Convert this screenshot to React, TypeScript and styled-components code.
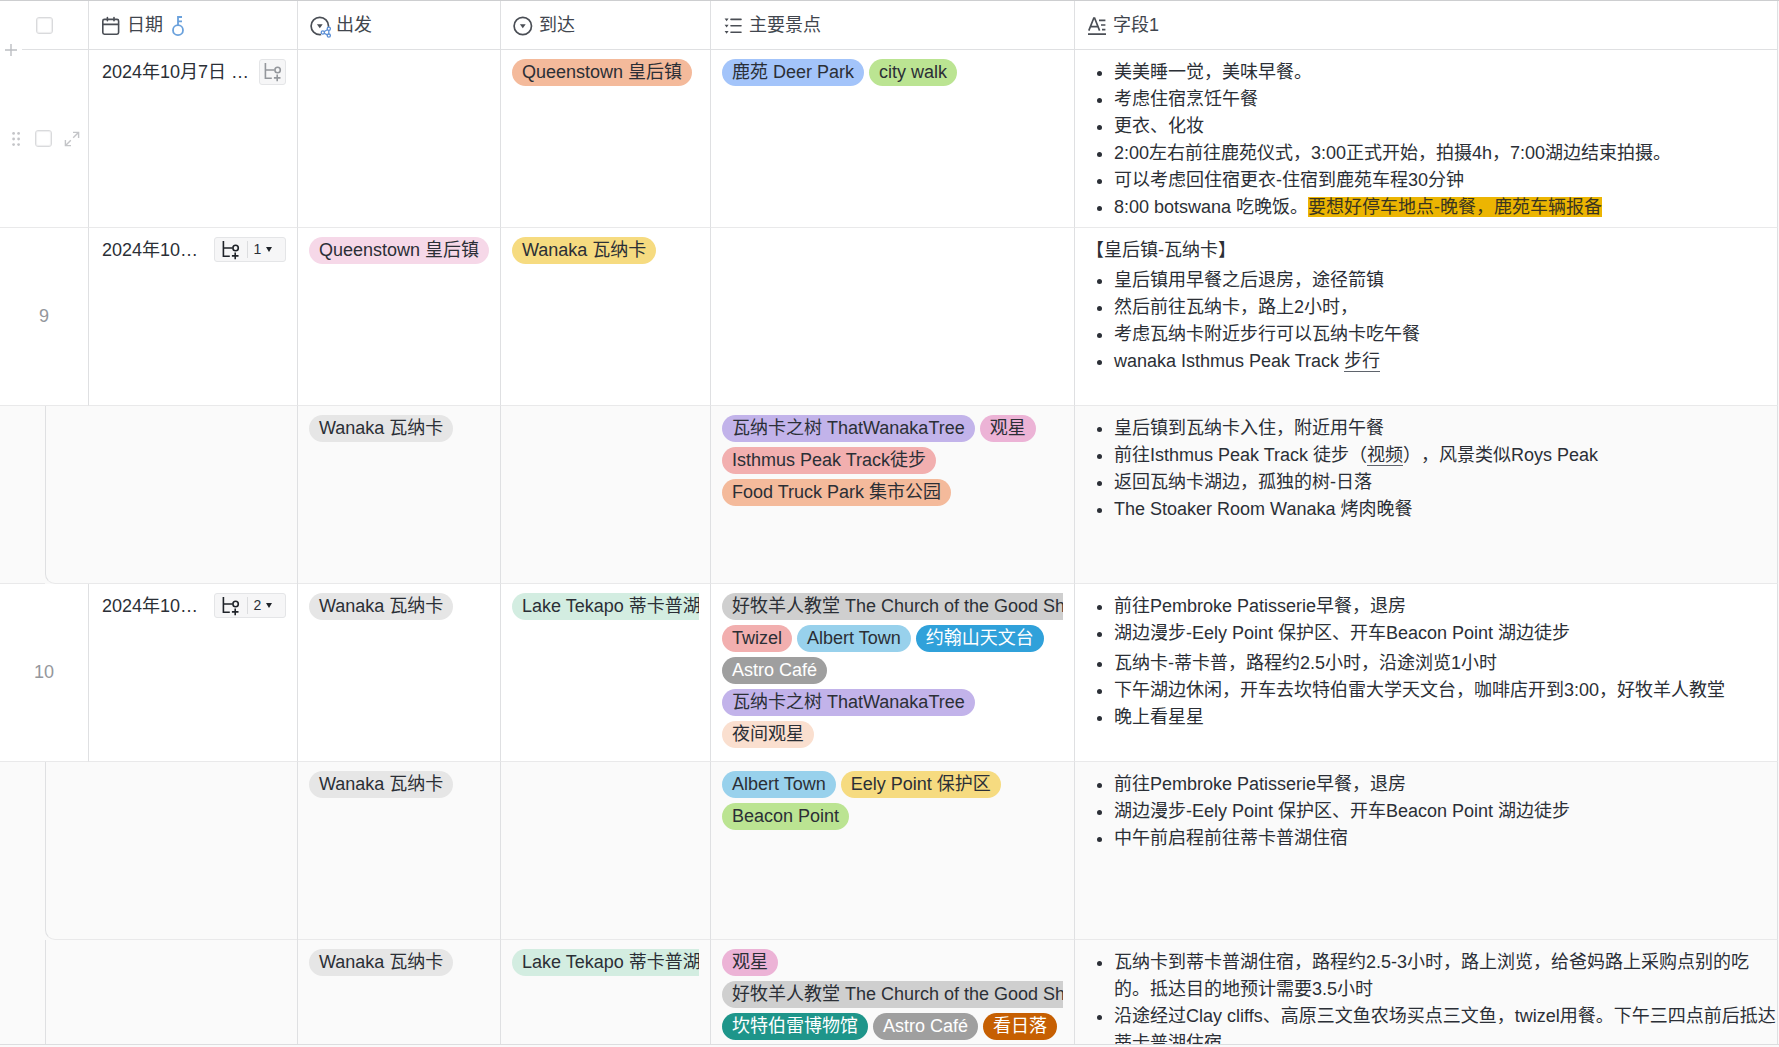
import React from "react";
import styled, { createGlobalStyle, css } from "styled-components";

const LINE = "#dfe0e2";
const ROW_LINE = "#e9e9ea";

const GlobalStyle = createGlobalStyle`
  *, *::before, *::after { box-sizing: border-box; }
  body {
    margin: 0;
    background: #fff;
    color: #2b2f36;
    font-family: "Liberation Sans", "Noto Sans CJK SC", sans-serif;
    font-size: 18px;
    line-height: 27px;
    text-spacing-trim: space-all;
  }
  button { font: inherit; color: inherit; cursor: pointer; }
`;

const Page = styled.div`
  display: flex;
  flex-direction: column;
  height: 100vh;
  padding-bottom: 2px;
  background: #fafafa;
`;

const GridView = styled.main`
  flex: 1;
  min-height: 0;
  overflow: hidden;
  border-top: 1px solid #cdced0;
  border-bottom: 1px solid #dcdddf;
  padding-right: 1px;
`;

const Table = styled.table`
  width: 100%;
  table-layout: fixed;
  border-collapse: separate;
  border-spacing: 0;
  background: #fff;
`;

const Col = styled.col<{ $w?: number }>`
  ${(p) => p.$w && css`width: ${p.$w}px;`}
`;

const HeadCell = styled.th`
  position: relative;
  height: 49px;
  padding: 0 12px;
  border-right: 1px solid ${LINE};
  border-bottom: 1px solid ${LINE};
  font-weight: 400;
  text-align: left;
  color: #41464e;
`;

const HeadLabel = styled.div`
  display: flex;
  align-items: center;
  gap: 6px;
  padding-top: 1px;
  svg { flex: none; }
`;

const KeyMark = styled.span`
  display: flex;
  padding-left: 2px;
`;

const AddButton = styled.button`
  position: absolute;
  left: 0;
  bottom: -9px;
  width: 22px;
  height: 16px;
  padding: 0 0 0 5px;
  border: 0;
  background: #fff;
  display: flex;
  align-items: center;
`;

const Centered = styled.div`
  display: flex;
  justify-content: center;
`;

const Tick = styled.input`
  appearance: none;
  flex: none;
  width: 17px;
  height: 17px;
  margin: 0;
  border: 1px solid #d9dadc;
  border-radius: 3px;
  background: #fff;
  box-shadow: inset 0 0 1px 1px #eeeeef;
`;

const Cell = styled.td<{ $child?: boolean }>`
  height: 178px;
  padding: 0;
  vertical-align: top;
  border-right: 1px solid ${LINE};
  border-bottom: 1px solid ${ROW_LINE};
  background: ${(p) => (p.$child ? "#fafafa" : "#fff")};
`;

const Clip = styled.div`
  height: 177px;
  padding: 9px 11px 0;
  overflow: hidden;
`;

const IndexBox = styled.div`
  display: flex;
  align-items: center;
  justify-content: center;
  height: 177px;
  color: #94979c;
`;

const RowTools = styled(IndexBox)`
  justify-content: space-between;
  padding: 0 8px 0 12px;
`;

const IconButton = styled.button`
  display: flex;
  padding: 0;
  border: 0;
  background: none;
`;

const BranchCell = styled.td`
  height: 178px;
  padding: 0;
  border-right: 1px solid ${LINE};
  background: #fafafa;
`;

const Branch = styled.div`
  display: grid;
  grid-template-columns: 45px 1fr;
  height: 178px;
`;

const BranchGutter = styled.div<{ $end?: boolean }>`
  border-bottom: 1px solid ${(p) => (p.$end ? ROW_LINE : "transparent")};
`;

const BranchBody = styled.div`
  border-left: 1px solid ${LINE};
  border-bottom: 1px solid ${ROW_LINE};
  border-bottom-left-radius: 10px;
`;

const DateClip = styled(Clip)`
  display: flex;
  align-items: flex-start;
  justify-content: space-between;
  padding-left: 13px;
  white-space: nowrap;
`;

const AddChild = styled.button`
  display: flex;
  align-items: center;
  justify-content: center;
  width: 27px;
  height: 26px;
  padding: 0;
  border: 1px solid #e4e5e7;
  border-radius: 3px;
  background: #f6f6f7;
`;

const ChildGroup = styled.div`
  display: flex;
  align-items: center;
  width: 72px;
  height: 25px;
  border: 1px solid #e4e5e7;
  border-radius: 3px;
  background: #f6f6f7;
`;

const GroupButton = styled.button`
  display: flex;
  align-items: center;
  justify-content: center;
  gap: 5px;
  height: 17px;
  flex: 1;
  padding: 0;
  border: 0;
  background: none;
  font-size: 14px;
  line-height: 17px;
  & + & {
    justify-content: flex-start;
    padding-left: 6px;
    border-left: 1px solid #dcdddf;
  }
`;

const Chips = styled.div`
  display: flex;
  flex-wrap: wrap;
  gap: 5px;
  overflow: hidden;
`;

const Chip = styled.span<{ $bg: string; $light?: boolean }>`
  flex: none;
  height: 27px;
  padding: 0 10px;
  border-radius: 14px;
  white-space: nowrap;
  background: ${(p) => p.$bg};
  color: ${(p) => (p.$light ? "#fff" : "#2b2f36")};
`;

const NoteClip = styled(Clip)`
  padding-right: 0;
`;

const List = styled.ul`
  margin: 0;
  padding: 0 0 0 28px;
  & + & { margin-top: 3px; }
`;

const Heading = styled.p`
  margin: 0 0 3px;
`;

const Mark = styled.mark`
  background: #ecb502;
  color: #3b3520;
`;

const Link = styled.a`
  color: inherit;
  text-decoration: none;
  border-bottom: 1px solid #5f646c;
`;

const CalendarIcon = () => (
  <svg width="20" height="20" viewBox="0 0 20 20" fill="none" stroke="#4a4e55" strokeWidth="1.6" strokeLinecap="round">
    <rect x="1.8" y="3.4" width="15.8" height="14.8" rx="1.6" />
    <path d="M2 8.4h15.4M6.4 1.6v3.2M13 1.6v3.2" />
  </svg>
);

const KeyIcon = () => (
  <svg width="14" height="22" viewBox="0 0 14 22" fill="none" stroke="#6aa1dc" strokeWidth="1.8">
    <circle cx="7" cy="15.2" r="5" />
    <path d="M7 10.2V1M7 2h4M7 6.4h4" />
  </svg>
);

const SelectIcon = ({ shared }: { shared?: boolean }) => (
  <svg width="20" height="22" viewBox="0 0 20 22" fill="none" overflow="visible">
    <circle cx="9.8" cy="11" r="8.7" stroke="#4a4e55" strokeWidth="1.7" />
    <path d="M6.9 9.2h5.8l-2.9 4z" fill="#4a4e55" />
    {shared && (
      <>
        <circle cx="16.6" cy="17.6" r="6" fill="#fff" />
        <g stroke="#5b8fd6" strokeWidth="1.3">
          <path d="M12.8 17.5l6-3.7v6.8z" />
          <circle cx="12.8" cy="17.5" r="1.6" fill="#fff" />
          <circle cx="18.8" cy="13.8" r="1.6" fill="#fff" />
          <circle cx="18.8" cy="20.6" r="1.6" fill="#fff" />
        </g>
      </>
    )}
  </svg>
);

const MultiIcon = () => (
  <svg width="20" height="20" viewBox="0 0 20 20" fill="#4a4e55">
    <path d="M1.6 2.4h4L3.6 5.2zM1.6 8.7h4l-2 2.8zM1.6 15h4l-2 2.8z" />
    <path d="M8 3.4h10M8 9.8h10M8 16.2h10" stroke="#4a4e55" strokeWidth="1.6" strokeLinecap="round" />
  </svg>
);

const TextIcon = () => (
  <svg width="20" height="20" viewBox="0 0 20 20" fill="none" stroke="#4a4e55" strokeWidth="1.7">
    <path d="M1.8 14.6L6.8 2h.8l5 12.6M3.6 10.6h7.2M12 4.4h6.4M14 9h4.4M15 13.6h3.4M1 18.2h18" />
  </svg>
);

const TreeIcon = ({ color }: { color: string }) => (
  <svg width="18" height="20" viewBox="0 0 18 20" fill="none" stroke={color} strokeWidth="1.6">
    <path d="M1.4 1v15.2h6.4M1.4 8h9M13.2 12.6v6.6M9.9 15.9h6.6" />
    <circle cx="13.6" cy="8" r="2.7" />
  </svg>
);

const Caret = () => (
  <svg width="6" height="5" viewBox="0 0 6 5">
    <path d="M0 0h6L3 5z" fill="#1f2329" />
  </svg>
);

const PlusIcon = () => (
  <svg width="12" height="12" viewBox="0 0 12 12" stroke="#bcbec2" strokeWidth="1.4">
    <path d="M6 0v12M0 6h12" />
  </svg>
);

const DragIcon = () => (
  <svg width="10" height="16" viewBox="0 0 10 16" fill="#c4c5c8">
    {[2.4, 8, 13.6].map((y) => (
      <React.Fragment key={y}>
        <circle cx="1.6" cy={y} r="1.4" />
        <circle cx="6.6" cy={y} r="1.4" />
      </React.Fragment>
    ))}
  </svg>
);

const ExpandIcon = () => (
  <svg width="16" height="16" viewBox="0 0 16 16" fill="none" stroke="#c4c5c8" strokeWidth="1.4">
    <path d="M9 1.4h5.6V7M14.4 1.6L9.2 6.8M7 14.6H1.4V9M1.6 14.4l5.2-5.2" />
  </svg>
);

type Tag = [label: string, bg: string, light?: boolean];

const GREY = "#e6e6e6";
const WANAKA_FROM: Tag = ["Wanaka 瓦纳卡", GREY];
const TEKAPO: Tag = ["Lake Tekapo 蒂卡普湖", "#d3ede1"];
const CHURCH: Tag = ["好牧羊人教堂 The Church of the Good Shepherd", "#cfcfcf"];
const TREE: Tag = ["瓦纳卡之树 ThatWanakaTree", "#c2b3ea"];
const STARS: Tag = ["观星", "#ecb3d6"];
const ALBERT: Tag = ["Albert Town", "#98d1ec"];
const ASTRO: Tag = ["Astro Café", "#9f9f9f", true];

interface Row {
  kind: "hover" | "parent" | "child";
  index?: number;
  date?: string;
  children?: number;
  groupEnd?: boolean;
  from?: Tag[];
  to?: Tag[];
  sights?: Tag[];
  heading?: string;
  notes: React.ReactNode[][];
}

const rows: Row[] = [
  {
    kind: "hover",
    date: "2024年10月7日 …",
    to: [["Queenstown 皇后镇", "#f4ba9b"]],
    sights: [["鹿苑 Deer Park", "#a3c4fa"], ["city walk", "#bbe492"]],
    notes: [[
      "美美睡一觉，美味早餐。",
      "考虑住宿烹饪午餐",
      "更衣、化妆",
      "2:00左右前往鹿苑仪式，3:00正式开始，拍摄4h，7:00湖边结束拍摄。",
      "可以考虑回住宿更衣-住宿到鹿苑车程30分钟",
      <>8:00 botswana 吃晚饭。<Mark>要想好停车地点-晚餐，鹿苑车辆报备</Mark></>,
    ]],
  },
  {
    kind: "parent",
    index: 9,
    date: "2024年10…",
    children: 1,
    from: [["Queenstown 皇后镇", "#f6d8e8"]],
    to: [["Wanaka 瓦纳卡", "#f6db80"]],
    heading: "【皇后镇-瓦纳卡】",
    notes: [[
      "皇后镇用早餐之后退房，途径箭镇",
      "然后前往瓦纳卡，路上2小时，",
      "考虑瓦纳卡附近步行可以瓦纳卡吃午餐",
      <>wanaka Isthmus Peak Track <Link href="#walk">步行</Link></>,
    ]],
  },
  {
    kind: "child",
    groupEnd: true,
    from: [WANAKA_FROM],
    sights: [TREE, STARS, ["Isthmus Peak Track徒步", "#f2afaf"], ["Food Truck Park 集市公园", "#f4ba9b"]],
    notes: [[
      "皇后镇到瓦纳卡入住，附近用午餐",
      <>前往Isthmus Peak Track 徒步（<Link href="#video">视频</Link>），风景类似Roys Peak</>,
      "返回瓦纳卡湖边，孤独的树-日落",
      "The Stoaker Room Wanaka 烤肉晚餐",
    ]],
  },
  {
    kind: "parent",
    index: 10,
    date: "2024年10…",
    children: 2,
    from: [WANAKA_FROM],
    to: [TEKAPO],
    sights: [CHURCH, ["Twizel", "#f2afaf"], ALBERT, ["约翰山天文台", "#30a1da", true], ASTRO, TREE, ["夜间观星", "#fadfcf"]],
    notes: [
      ["前往Pembroke Patisserie早餐，退房", "湖边漫步-Eely Point 保护区、开车Beacon Point 湖边徒步"],
      [
        "瓦纳卡-蒂卡普，路程约2.5小时，沿途浏览1小时",
        "下午湖边休闲，开车去坎特伯雷大学天文台，咖啡店开到3:00，好牧羊人教堂",
        "晚上看星星",
      ],
    ],
  },
  {
    kind: "child",
    from: [WANAKA_FROM],
    sights: [ALBERT, ["Eely Point 保护区", "#f6db80"], ["Beacon Point", "#bbe492"]],
    notes: [[
      "前往Pembroke Patisserie早餐，退房",
      "湖边漫步-Eely Point 保护区、开车Beacon Point 湖边徒步",
      "中午前启程前往蒂卡普湖住宿",
    ]],
  },
  {
    kind: "child",
    groupEnd: true,
    from: [WANAKA_FROM],
    to: [TEKAPO],
    sights: [STARS, CHURCH, ["坎特伯雷博物馆", "#1e958a", true], ASTRO, ["看日落", "#c65f02", true]],
    notes: [[
      "瓦纳卡到蒂卡普湖住宿，路程约2.5-3小时，路上浏览，给爸妈路上采购点别的吃的。抵达目的地预计需要3.5小时",
      "沿途经过Clay cliffs、高原三文鱼农场买点三文鱼，twizel用餐。下午三四点前后抵达蒂卡普湖住宿",
    ]],
  },
];

const TagCell = ({ tags = [], child }: { tags?: Tag[]; child: boolean }) => (
  <Cell $child={child}>
    <Clip>
      <Chips>
        {tags.map(([label, bg, light]) => (
          <Chip key={label} $bg={bg} $light={light}>{label}</Chip>
        ))}
      </Chips>
    </Clip>
  </Cell>
);

const LeadCells = ({ row }: { row: Row }) => {
  if (row.kind === "child") {
    return (
      <BranchCell colSpan={2}>
        <Branch>
          <BranchGutter $end={row.groupEnd} />
          <BranchBody />
        </Branch>
      </BranchCell>
    );
  }
  return (
    <>
      <Cell>
        {row.kind === "hover" ? (
          <RowTools>
            <IconButton aria-label="拖动"><DragIcon /></IconButton>
            <Tick type="checkbox" aria-label="选择行" />
            <IconButton aria-label="展开"><ExpandIcon /></IconButton>
          </RowTools>
        ) : (
          <IndexBox>{row.index}</IndexBox>
        )}
      </Cell>
      <Cell>
        <DateClip>
          <span>{row.date}</span>
          {row.children ? (
            <ChildGroup>
              <GroupButton aria-label="添加子记录"><TreeIcon color="#1f2329" /></GroupButton>
              <GroupButton>{row.children}<Caret /></GroupButton>
            </ChildGroup>
          ) : (
            <AddChild aria-label="添加子记录"><TreeIcon color="#94979c" /></AddChild>
          )}
        </DateClip>
      </Cell>
    </>
  );
};

export default function App() {
  return (
    <Page>
      <GlobalStyle />
      <GridView>
        <Table>
          <colgroup>
            <Col $w={89} />
            <Col $w={209} />
            <Col $w={203} />
            <Col $w={210} />
            <Col $w={364} />
            <Col />
          </colgroup>
          <thead>
            <tr>
              <HeadCell>
                <Centered><Tick type="checkbox" aria-label="全选" /></Centered>
                <AddButton aria-label="添加"><PlusIcon /></AddButton>
              </HeadCell>
              <HeadCell><HeadLabel><CalendarIcon />日期<KeyMark><KeyIcon /></KeyMark></HeadLabel></HeadCell>
              <HeadCell><HeadLabel><SelectIcon shared />出发</HeadLabel></HeadCell>
              <HeadCell><HeadLabel><SelectIcon />到达</HeadLabel></HeadCell>
              <HeadCell><HeadLabel><MultiIcon />主要景点</HeadLabel></HeadCell>
              <HeadCell><HeadLabel><TextIcon />字段1</HeadLabel></HeadCell>
            </tr>
          </thead>
          <tbody>
            {rows.map((row, i) => {
              const child = row.kind === "child";
              return (
                <tr key={i}>
                  <LeadCells row={row} />
                  <TagCell tags={row.from} child={child} />
                  <TagCell tags={row.to} child={child} />
                  <TagCell tags={row.sights} child={child} />
                  <Cell $child={child}>
                    <NoteClip>
                      {row.heading && <Heading>{row.heading}</Heading>}
                      {row.notes.map((items, n) => (
                        <List key={n}>
                          {items.map((item, k) => <li key={k}>{item}</li>)}
                        </List>
                      ))}
                    </NoteClip>
                  </Cell>
                </tr>
              );
            })}
          </tbody>
        </Table>
      </GridView>
    </Page>
  );
}
